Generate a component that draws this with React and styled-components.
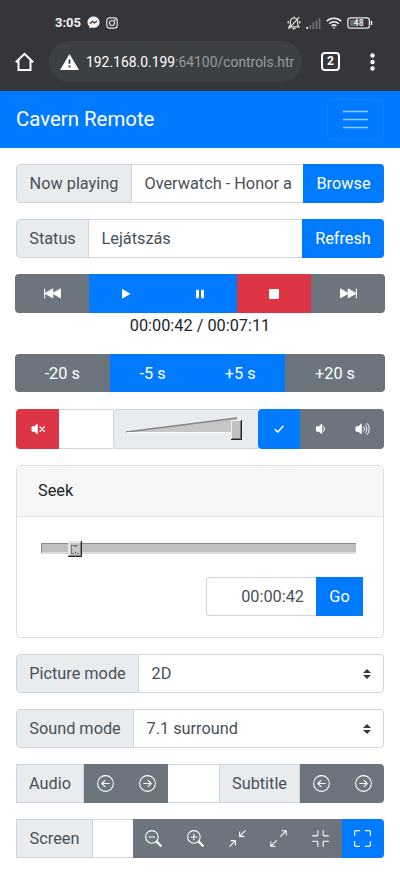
import styled, { createGlobalStyle, css } from "styled-components";

const GlobalStyle = createGlobalStyle`
  * {
    box-sizing: border-box;
  }

  body {
    margin: 0;
    background: #fff;
    font-family: Roboto, "Liberation Sans", sans-serif;
    overflow: hidden;
  }
`;

const colors = {
  primary: "#007bff",
  secondary: "#6c757d",
  danger: "#dc3545",
};

const Screen = styled.div`
  width: 400px;
  height: 890px;
  background: #fff;
  color: #212529;
  font-size: 16.3px;
  line-height: 24px;
  white-space: nowrap;

  & svg {
    display: block;
    flex-shrink: 0;
  }
`;

const PhoneTop = styled.div`
  height: 91px;
  background: #35363a;
  color: #fff;
`;

const StatusBar = styled.div`
  height: 41px;
  padding: 4px 27px 0 55px;
  display: flex;
  align-items: center;
  justify-content: space-between;
`;

const StatusGroup = styled.div`
  display: flex;
  align-items: center;
  gap: ${(props) => props.$gap}px;
`;

const Clock = styled.span`
  width: 26px;
  font-size: 13px;
  font-weight: 700;
  color: #f1f1f1;
`;

const AddressBar = styled.div`
  height: 41px;
  padding: 0 26px 0 15px;
  display: flex;
  align-items: center;
`;

const AddressPill = styled.div`
  width: 253px;
  flex-shrink: 0;
  height: 41px;
  margin: 0 19px 0 15px;
  padding-left: 11px;
  border-radius: 21px;
  background: #3c4043;
  display: flex;
  align-items: center;
  gap: 7px;
`;

const Url = styled.div`
  padding-top: 1px;
  font-size: 13.9px;
  color: #979a9d;

  & b {
    color: #fff;
    font-weight: 400;
  }
`;

const Tabs = styled.div`
  width: 19px;
  height: 19px;
  flex-shrink: 0;
  margin-right: 30px;
  border: 2px solid #fff;
  border-radius: 4px;
  font-size: 12px;
  font-weight: 700;
  line-height: 15px;
  text-align: center;
`;

const Navbar = styled.div`
  height: 57px;
  padding: 0 16px;
  background: ${colors.primary};
  color: #fff;
  display: flex;
  align-items: center;
  justify-content: space-between;
`;

const Brand = styled.span`
  padding-bottom: 2px;
  font-size: 20.4px;
`;

const Toggler = styled.div`
  width: 57px;
  height: 41px;
  border: 1px solid rgba(255, 255, 255, 0.08);
  border-radius: 4px;
  display: flex;
  align-items: center;
  justify-content: center;
`;

const Content = styled.div`
  padding: 16px 16px 0;
`;

const Group = styled.div`
  height: 39px;
  margin-bottom: 16px;
  display: flex;
  border-radius: ${(props) => (props.$square ? "0 4px 4px 0" : "4px")};
  overflow: hidden;
`;

const VolumeGroup = styled(Group)`
  height: 40px;
  margin-top: 17px;
`;

const Label = styled.div`
  width: ${(props) => props.$width}px;
  flex-shrink: 0;
  border: 1px solid #ced4da;
  border-radius: ${(props) => (props.$square ? 0 : "4px 0 0 4px")};
  background: #e9ecef;
  color: #495057;
  display: flex;
  align-items: center;
  justify-content: center;
`;

const Field = styled.div`
  flex: 1;
  min-width: 0;
  padding: 0 12px 0 12.5px;
  border: 1px solid #ced4da;
  border-width: 1px 0;
  color: #495057;
  display: flex;
  align-items: center;
`;

const Select = styled(Field)`
  border-right-width: 1px;
  border-radius: 0 4px 4px 0;
  justify-content: space-between;
`;

const Button = styled.div`
  ${(props) =>
    props.$width
      ? css`
          flex: 0 0 ${props.$width}px;
        `
      : css`
          flex: 1;
        `}
  background: ${(props) => colors[props.$variant || "secondary"]};
  border-radius: ${(props) => (props.$roundLeft ? "4px 0 0 4px" : 0)};
  color: #fff;
  display: flex;
  align-items: center;
  justify-content: center;
`;

const ButtonBar = styled.div`
  height: 39px;
  margin: 0 -1px;
  display: flex;
  border-radius: 4px;
  overflow: hidden;
`;

const Elapsed = styled.div`
  height: 41px;
  padding-top: 1px;
  color: #212529;
  text-align: center;
`;

const VolumeBox = styled.div`
  width: 145px;
  padding-left: 12px;
  border: 1px solid #ced4da;
  border-right: 0;
  border-radius: 4px 0 0 4px;
  background: #e9ecef;
  display: flex;
  align-items: center;
`;

const Card = styled.div`
  height: 173px;
  margin-bottom: 16px;
  border: 1px solid #dfdfdf;
  border-radius: 4px;
`;

const CardHeader = styled.div`
  height: 51px;
  padding: 0 21px;
  border-bottom: 1px solid #dfdfdf;
  background: #f7f7f7;
  display: flex;
  align-items: center;
`;

const CardBody = styled.div`
  padding: 23px 20px 0 23px;
`;

const SeekForm = styled.div`
  width: 157px;
  height: 39px;
  margin: 19px 0 0 auto;
  display: flex;
`;

const TimeField = styled(Field)`
  border-left-width: 1px;
  border-radius: 4px 0 0 4px;
  justify-content: flex-end;
`;

const Icon = ({ size = 16, children }) => (
  <svg
    width={size}
    height={size}
    viewBox="0 0 16 16"
    fill="none"
    stroke="currentColor"
    strokeLinecap="round"
    strokeLinejoin="round"
  >
    {children}
  </svg>
);

const Skip = ({ back }) => (
  <Icon size={17}>
    <g
      transform={back ? "translate(16 0) scale(-1 1)" : undefined}
      fill="currentColor"
      strokeWidth="0.8"
    >
      <path d="M.5 3.9v8.2L7.700 8zM7.700 3.900v8.200L15 8z" />
      <path d="M15.4 3.8v8.4" strokeWidth="1" />
    </g>
  </Icon>
);

const Play = () => (
  <Icon>
    <path d="M4.5 4v8l7-4z" fill="currentColor" />
  </Icon>
);

const Pause = () => (
  <Icon>
    <path d="M5.5 5v6M10.5 5v6" strokeWidth="3" />
  </Icon>
);

const Stop = () => (
  <Icon>
    <rect x="3" y="3" width="10" height="10" rx="1.2" fill="currentColor" stroke="none" />
  </Icon>
);

const speakerShift = { 0: 0, 1: 1.5, 3: -1 };

const Speaker = ({ level }) => (
  <Icon size={16}>
    <path
      d="M7 3.5 4.3 5.8H2v4.4h2.3L7 12.5z"
      fill="currentColor"
      transform={`translate(${speakerShift[level]} 0)`}
    />
    {level === 0 && <path d="m10 6 4.2 4.2m0-4.2L10 10.2" strokeWidth="1.3" />}
    {level === 1 && <path d="M10.7 5.7a3.5 3.5 0 0 1 0 4.6" />}
    {level === 3 && (
      <path d="M8.7 5.9a3 3 0 0 1 0 4.2M10.4 4.2a5.4 5.4 0 0 1 0 7.6M12.2 2.5a7.800 7.800 0 0 1 0 11" />
    )}
  </Icon>
);

const Check = () => (
  <Icon>
    <path d="m4.2 8.5 2.600 2.600L12 5.200" strokeWidth="1.5" />
  </Icon>
);

const CircleArrow = ({ left }) => (
  <Icon size={17}>
    <g transform={left ? "translate(16 0) scale(-1 1)" : undefined}>
      <circle cx="8" cy="8" r="7.4" />
      <path d="M4.5 8h7M8.5 5l3 3-3 3" />
    </g>
  </Icon>
);

const Zoom = ({ plus }) => (
  <Icon size={17}>
    <circle cx="6.5" cy="6.5" r="5.9" />
    <path d={plus ? "M3.8 6.5h5.4M6.5 3.8v5.4" : "M3.8 6.5h5.4"} />
    <path d="m11.2 11.2 3.7 3.7" strokeWidth="2.1" />
  </Icon>
);

const Contract = () => (
  <Icon size={17}>
    <path d="M15.3.7 10.2 5.8M10 2v4h4M.7 15.3l5.1-5.1M2 10h4v4" />
  </Icon>
);

const Expand = () => (
  <Icon size={17}>
    <path d="M10 6l5.3-5.3M11.3.7h4v4M6 10 .7 15.3M.7 11.3v4h4" />
  </Icon>
);

const ExitFull = () => (
  <Icon size={17}>
    <path d="M5.5.6v4.1a.8.8 0 0 1-.8.8H.6M10.5.6v4.1a.8.8 0 0 0 .8.8h4.1M5.5 15.4v-4.1a.8.8 0 0 0-.8-.8H.6M10.5 15.4v-4.1a.8.8 0 0 1 .8-.8h4.1" />
  </Icon>
);

const Full = () => (
  <Icon size={17}>
    <path
      d="M.6 5.2V1.6a1 1 0 0 1 1-1h3.6M10.8.6h3.6a1 1 0 0 1 1 1v3.6M15.4 10.8v3.6a1 1 0 0 1-1 1h-3.6M5.2 15.4H1.6a1 1 0 0 1-1-1v-3.6"
      strokeWidth="1.1"
    />
  </Icon>
);

const Caret = () => (
  <svg width="8" height="10" viewBox="0 0 8 10" fill="#343a40">
    <path d="M4 0 0 4h8zM4 10 0 6h8z" />
  </svg>
);

const Messenger = () => (
  <svg width="13" height="13" viewBox="0 0 13 13">
    <path
      d="M6.5.5C3 .5.5 3 .5 6.2c0 1.7.7 3.1 1.9 4.2v2l1.900-.9c.7.2 1.400.3 2.200.3 3.500 0 6-2.500 6-5.600S10 .5 6.500.5z"
      fill="#f1f1f1"
    />
    <path d="m2.9 7.9 2.5-2.600L7.300 7 10 5" fill="none" stroke="#35363a" strokeWidth="1.3" />
  </svg>
);

const Instagram = () => (
  <svg width="12" height="12" viewBox="0 0 12 12" fill="none" stroke="#e4e4e4" strokeWidth="1.2">
    <rect x=".8" y=".8" width="10.4" height="10.4" rx="3" />
    <circle cx="6" cy="6" r="2.5" />
    <circle cx="9" cy="3" r=".3" />
  </svg>
);

const MutedBell = () => (
  <svg width="14" height="14" viewBox="0 0 14 14" fill="none" stroke="#e4e4e4" strokeWidth="1.2">
    <path d="M2 10.8h10L10.7 9V6c0-2.3-1.4-4-3.7-4S3.3 3.7 3.3 6v3zM5.5 12.6h3M7 .5V2M1.2 5v2.5M12.8 5v2.5M12.3 1.2 1.5 12.8" />
  </svg>
);

const Signal = () => (
  <svg width="15" height="12" viewBox="0 0 15 12" strokeWidth="1.7">
    <path d="M1.2 12v-2" stroke="#fff" />
    <path d="M4.3 12V8M7.4 12V5.5M10.5 12V3.5M13.6 12V1" stroke="#727376" />
  </svg>
);

const Wifi = () => (
  <svg width="16" height="12" viewBox="0 0 16 12" fill="none" stroke="#eee" strokeWidth="1.5">
    <path d="M.7 4.2a10.3 10.3 0 0 1 14.6 0M3.2 6.7a6.8 6.8 0 0 1 9.6 0M5.6 9.1a3.4 3.4 0 0 1 4.8 0" />
    <circle cx="8" cy="10.8" r=".9" fill="#eee" stroke="none" />
  </svg>
);

const Battery = () => (
  <svg width="26" height="12" viewBox="0 0 26 12">
    <rect x=".8" y=".8" width="21.6" height="10.4" rx="2.5" fill="none" stroke="#e4e4e4" strokeWidth="1.3" />
    <path d="M24.5 4v4" stroke="#e4e4e4" strokeWidth="1.6" />
    <rect x="2.8" y="2.8" width="8" height="6.4" fill="#66676a" />
    <text x="11.7" y="9" fontSize="8.5" fontWeight="700" textAnchor="middle" fill="#e8e8e8">
      48
    </text>
  </svg>
);

const Home = () => (
  <svg width="19" height="20" viewBox="0 0 19 20" fill="none" stroke="#fff" strokeWidth="2">
    <path d="M.8 10.3 9.5 1.8l8.7 8.5M3.5 8.5V18h12V8.5" />
  </svg>
);

const Warning = () => (
  <svg width="19" height="16" viewBox="0 0 19 16">
    <path d="M9.5 0 19 16H0z" fill="#fff" />
    <path d="M9.5 5.5v4.2M9.5 11.5v2" stroke="#3c4043" strokeWidth="1.9" />
  </svg>
);

const Dots = () => (
  <svg width="5" height="18" viewBox="0 0 5 18" fill="#fff">
    <circle cx="2.5" cy="2.5" r="2.2" />
    <circle cx="2.5" cy="9" r="2.2" />
    <circle cx="2.5" cy="15.5" r="2.2" />
  </svg>
);

const Burger = () => (
  <svg width="25" height="20" viewBox="0 0 25 20" stroke="#8fc8ff" strokeWidth="1.7">
    <path d="M0 1.500h25M0 9.500h25M0 17.500h25" />
  </svg>
);

const VolumeSlider = () => (
  <svg width="118" height="24" viewBox="0 0 118 24">
    <path d="M0 15 111 1v14z" fill="#c6c6c6" />
    <path d="M0 15 111 .9" stroke="#858585" strokeWidth="1.5" />
    <path d="M1 15.500h110" stroke="#fff" />
    <path d="M105 3h11v20h-11z" fill="#222" />
    <path d="M105 3h10v19h-10z" fill="#eee" />
    <path d="M106 4h8v17h-8z" fill="#c0c0c0" />
    <path d="M114.5 4v18M106 21.5h9" stroke="#777" />
  </svg>
);

const SeekSlider = () => (
  <svg width="317" height="18" viewBox="0 0 317 18" shapeRendering="crispEdges">
    <path d="M1 3h315v11H1z" fill="#dedede" />
    <path d="M1 3h315v9H1z" fill="#bfbfbf" />
    <path d="M1 3.5h315M1.5 3v10" stroke="#898989" />
    <path d="M28 1h14v16H28z" fill="#29292b" />
    <path d="M28 1h13v15H28z" fill="#e8e8e8" />
    <path d="M30 3h10v12H30z" fill="#c4c4c4" />
    <path d="M31.5 14V5.5H38M31 13.5h3M37 13.5h2" stroke="#777" fill="none" />
    <path d="M40.5 2v14M29 15.5h12" stroke="#858585" />
    <path d="M35 6h1v1h-1zM35 12h1v1h-1z" fill="#333" />
  </svg>
);

export default function App() {
  return (
    <Screen>
      <GlobalStyle />
      <PhoneTop>
        <StatusBar>
          <StatusGroup $gap={6}>
            <Clock>3:05</Clock>
            <Messenger />
            <Instagram />
          </StatusGroup>
          <StatusGroup $gap={5}>
            <MutedBell />
            <Signal />
            <Wifi />
            <Battery />
          </StatusGroup>
        </StatusBar>
        <AddressBar>
          <Home />
          <AddressPill>
            <Warning />
            <Url>
              <b>192.168.0.199</b>:64100/controls.htr
            </Url>
          </AddressPill>
          <Tabs>2</Tabs>
          <Dots />
        </AddressBar>
      </PhoneTop>

      <Navbar>
        <Brand>Cavern Remote</Brand>
        <Toggler>
          <Burger />
        </Toggler>
      </Navbar>

      <Content>
        <Group>
          <Label $width={116}>Now playing</Label>
          <Field>Overwatch - Honor a</Field>
          <Button $width={81} $variant="primary">Browse</Button>
        </Group>
        <Group>
          <Label $width={73}>Status</Label>
          <Field>Lejátszás</Field>
          <Button $width={82} $variant="primary">Refresh</Button>
        </Group>

        <ButtonBar>
          <Button><Skip back /></Button>
          <Button $variant="primary"><Play /></Button>
          <Button $variant="primary"><Pause /></Button>
          <Button $variant="danger"><Stop /></Button>
          <Button><Skip /></Button>
        </ButtonBar>
        <Elapsed>00:00:42 / 00:07:11</Elapsed>

        <ButtonBar as={SeekBar}>
          <Button $width={94.5}>-20 s</Button>
          <Button $width={86} $variant="primary">-5 s</Button>
          <Button $variant="primary">+5 s</Button>
          <Button $width={100}>+20 s</Button>
        </ButtonBar>

        <VolumeGroup>
          <Button $width={43} $variant="danger"><Speaker level={0} /></Button>
          <Field />
          <VolumeBox><VolumeSlider /></VolumeBox>
          <Button $width={42} $variant="primary" $roundLeft><Check /></Button>
          <Button $width={42}><Speaker level={1} /></Button>
          <Button $width={42}><Speaker level={3} /></Button>
        </VolumeGroup>

        <Card>
          <CardHeader>Seek</CardHeader>
          <CardBody>
            <SeekSlider />
            <SeekForm>
              <TimeField>00:00:42</TimeField>
              <Button $width={47} $variant="primary">Go</Button>
            </SeekForm>
          </CardBody>
        </Card>

        <Group>
          <Label $width={123}>Picture mode</Label>
          <Select>2D <Caret /></Select>
        </Group>
        <Group>
          <Label $width={118}>Sound mode</Label>
          <Select>7.1 surround <Caret /></Select>
        </Group>

        <Group $square>
          <Label $width={68} $square>Audio</Label>
          <Button $width={42}><CircleArrow left /></Button>
          <Button $width={42}><CircleArrow /></Button>
          <Field />
          <Label $width={81} $square>Subtitle</Label>
          <Button $width={42}><CircleArrow left /></Button>
          <Button $width={42}><CircleArrow /></Button>
        </Group>
        <Group $square>
          <Label $width={77} $square>Screen</Label>
          <Field />
          <Button $width={41.8}><Zoom /></Button>
          <Button $width={41.8}><Zoom plus /></Button>
          <Button $width={41.8}><Contract /></Button>
          <Button $width={41.8}><Expand /></Button>
          <Button $width={41.8}><ExitFull /></Button>
          <Button $width={42.5} $variant="primary"><Full /></Button>
        </Group>
      </Content>
    </Screen>
  );
}

const SeekBar = styled(ButtonBar)`
  height: 38px;
  padding-top: 0;

  & > div {
    padding-top: 1px;
  }
`;
